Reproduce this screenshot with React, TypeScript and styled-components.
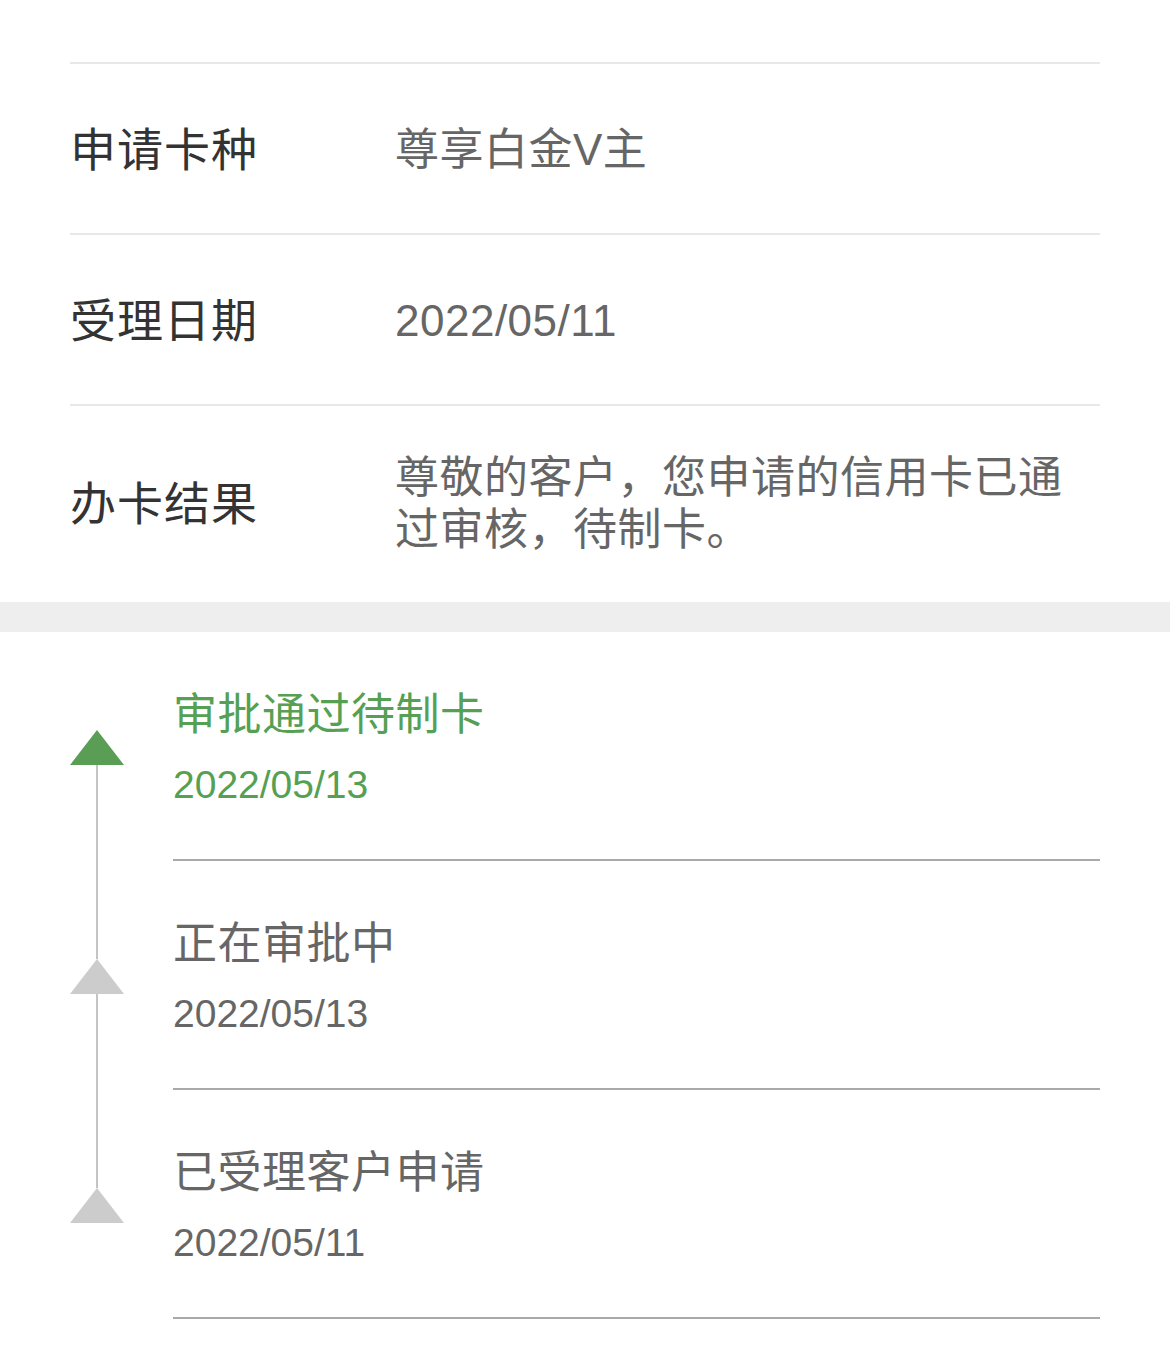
import React from "react";
import styled, { createGlobalStyle } from "styled-components";

const GlobalStyle = createGlobalStyle`
  html, body { margin: 0; padding: 0; background: #ffffff; }
  body { font-family: "Liberation Sans", "Noto Sans CJK SC", "Noto Sans", sans-serif; -webkit-font-smoothing: antialiased; }
`;

const Page = styled.div`
  width: 1170px;
  background: #ffffff;
`;

const InfoSection = styled.section`
  padding: 62px 70px 0 70px;
`;

const InfoRow = styled.div<{ $last?: boolean }>`
  display: flex;
  align-items: center;
  min-height: 171px;
  border-top: 2px solid #e8e8e8;
  box-sizing: border-box;
  padding: ${(p) => (p.$last ? "46px 0 46px" : "3px 0 0")};
`;

const Label = styled.div`
  width: 325px;
  flex-shrink: 0;
  font-size: 46px;
  line-height: 52px;
  color: #333333;
  letter-spacing: 1px;
`;

const Value = styled.div`
  max-width: 672px;
  font-size: 44px;
  line-height: 52px;
  color: #666666;
  letter-spacing: 0.5px;
`;

const Band = styled.div`
  height: 30px;
  background: #eeeeee;
`;

const Timeline = styled.section`
  padding: 0 70px 30px 70px;
`;

const Step = styled.div`
  display: flex;
  align-items: stretch;
`;

const Rail = styled.div`
  width: 54px;
  flex-shrink: 0;
  display: flex;
  flex-direction: column;
  align-items: center;
  margin-right: 49px;
`;

const RailLine = styled.div<{ $hidden?: boolean; $grow?: boolean }>`
  width: 2px;
  background: ${(p) => (p.$hidden ? "transparent" : "#c4c4c4")};
  height: ${(p) => (p.$grow ? "auto" : "98px")};
  flex: ${(p) => (p.$grow ? "1" : "none")};
`;

const Marker = styled.svg`
  display: block;
  flex-shrink: 0;
`;

const StepBody = styled.div`
  flex: 1;
  padding: 57px 0 48px 0;
  border-bottom: 2px solid #a9a9a9;
`;

const StepTitle = styled.div<{ $active?: boolean }>`
  font-size: 44px;
  line-height: 52px;
  letter-spacing: 0.5px;
  color: ${(p) => (p.$active ? "#55a052" : "#666666")};
`;

const StepDate = styled.div<{ $active?: boolean }>`
  margin-top: 18px;
  font-size: 39px;
  line-height: 52px;
  color: ${(p) => (p.$active ? "#55a052" : "#666666")};
`;

const steps = [
  { title: "审批通过待制卡", date: "2022/05/13", active: true },
  { title: "正在审批中", date: "2022/05/13", active: false },
  { title: "已受理客户申请", date: "2022/05/11", active: false },
];

export default function App() {
  return (
    <Page>
      <GlobalStyle />
      <InfoSection>
        <InfoRow>
          <Label>申请卡种</Label>
          <Value>尊享白金V主</Value>
        </InfoRow>
        <InfoRow>
          <Label>受理日期</Label>
          <Value>2022/05/11</Value>
        </InfoRow>
        <InfoRow $last>
          <Label>办卡结果</Label>
          <Value>尊敬的客户，您申请的信用卡已通过审核，待制卡。</Value>
        </InfoRow>
      </InfoSection>
      <Band />
      <Timeline>
        {steps.map((s, i) => (
          <Step key={i}>
            <Rail>
              <RailLine $hidden={i === 0} />
              <Marker width="54" height="35" viewBox="0 0 54 35">
                <polygon points="27,0 54,35 0,35" fill={s.active ? "#5a9e56" : "#cccccc"} />
              </Marker>
              <RailLine $grow $hidden={i === steps.length - 1} />
            </Rail>
            <StepBody>
              <StepTitle $active={s.active}>{s.title}</StepTitle>
              <StepDate $active={s.active}>{s.date}</StepDate>
            </StepBody>
          </Step>
        ))}
      </Timeline>
    </Page>
  );
}
